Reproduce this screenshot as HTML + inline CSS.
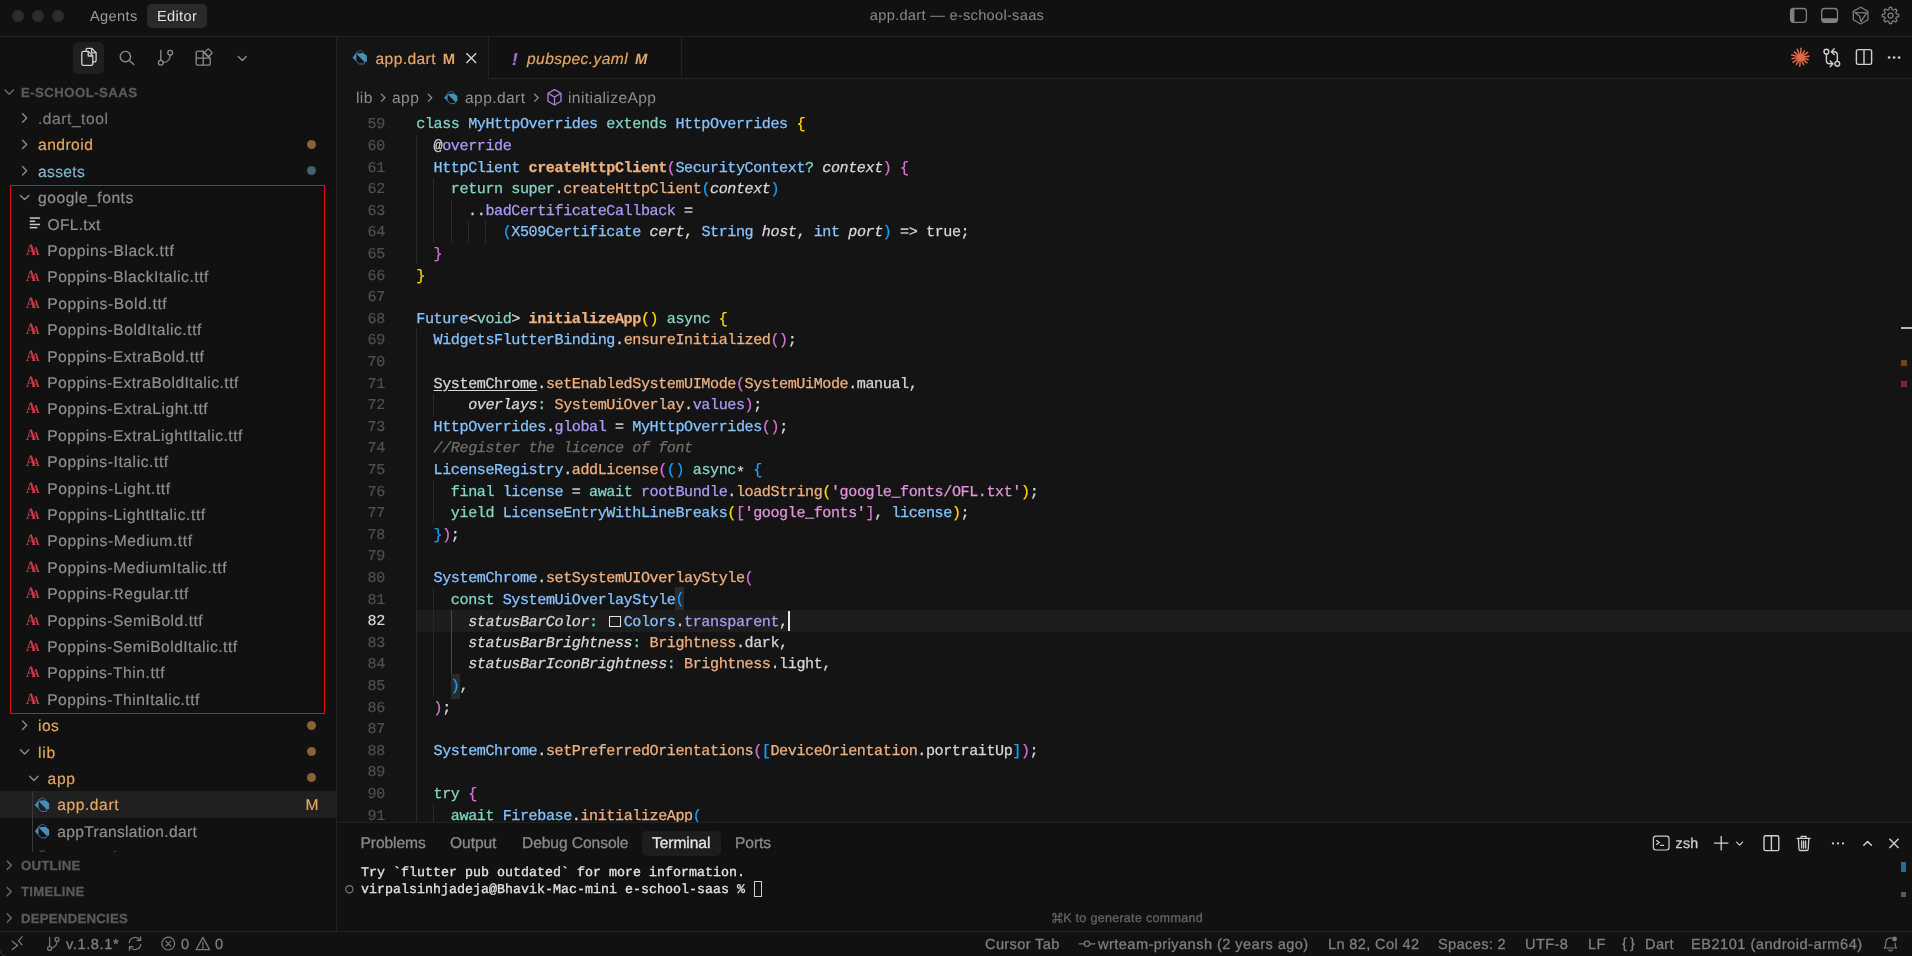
<!DOCTYPE html><html><head><meta charset="utf-8"><title>app.dart</title><style>
*{box-sizing:border-box;margin:0;padding:0}
html,body{width:1912px;height:956px;overflow:hidden;background:#111111;}
body{font-family:"Liberation Sans", sans-serif;font-size:15.6px;color:#8f8f8f;position:relative;text-rendering:geometricPrecision}
.abs{position:absolute}
#root{position:absolute;left:0;top:0;width:1912px;height:956px;will-change:transform}
svg{position:absolute;overflow:visible}
/* title bar */
#title{position:absolute;left:0;top:0;width:1912px;height:37px;background:#111111;border-bottom:1px solid #222222}
.tl{position:absolute;top:10px;width:12px;height:12px;border-radius:50%;background:#2c2c2c}
#agents{position:absolute;left:90px;top:9px;font-size:14.6px;color:#9a9a9a;letter-spacing:.35px}
#editorbtn{position:absolute;left:147px;top:4px;width:60px;height:24px;border-radius:5px;background:#2a2a2a;color:#e4e4e4;font-size:14.6px;text-align:center;line-height:26px;letter-spacing:.35px}
#ttext{position:absolute;left:757px;width:400px;top:8px;text-align:center;font-size:14.6px;color:#8a8a8a;letter-spacing:.3px}
/* sidebar */
#side{position:absolute;left:0;top:37px;width:337px;height:894px;background:#111111;border-right:1px solid #222222}
#actsel{position:absolute;left:73px;top:42px;width:31px;height:32px;border-radius:5px;background:#1f1f1f}
.sec{position:absolute;left:21px;font-size:13.2px;font-weight:bold;color:#5a5a5a;letter-spacing:.45px;line-height:28.4px;height:26.4px;-webkit-text-stroke:0.3px}
.row{position:absolute;left:0;width:336px;height:26.4px;line-height:26.4px;white-space:nowrap;letter-spacing:.5px;-webkit-text-stroke:0.2px}
.row span{position:absolute;top:2.2px}
.sel{background:#202020}
.mod{color:#e5a663} .unt{color:#7fb5cb} .ign{color:#7c7c7c}
.dot{position:absolute;left:306.5px;width:9px;height:9px;border-radius:50%}
.dm{background:#8a6234} .du{background:#426270}
#redbox{position:absolute;left:10px;top:185px;width:314.8px;height:529px;border:1.1px solid #ec0c0c}
/* editor */
#ed{position:absolute;left:337px;top:37px;width:1575px;height:786px;background:#141414}
#tabs{position:absolute;left:337px;top:37px;width:1575px;height:42px;background:#111111;border-bottom:1px solid #222222}
#tab1{position:absolute;left:337px;top:37px;width:152px;height:42px;background:#141414;border-right:1px solid #222222}
#tab2{position:absolute;left:489px;top:37px;width:193px;height:41px;border-right:1px solid #222222}
.tabt{position:absolute;top:50.6px;line-height:18px;font-size:15.6px;color:#e5a663;white-space:nowrap;letter-spacing:.4px;-webkit-text-stroke:0.2px}
#crumbs span{position:absolute;top:89.6px;line-height:18px;font-size:15.6px;color:#8f8f8f;white-space:nowrap;letter-spacing:.4px}
/* code */
.ln{position:absolute;left:337px;width:47.8px;text-align:right;font-family:"Liberation Mono", monospace;font-size:15.1px;letter-spacing:-0.42px;-webkit-text-stroke:0.2px;line-height:21.6px;height:21.6px;color:#505050}
.cur-ln{color:#d6d6dd}
.cl{position:absolute;left:416.3px;font-family:"Liberation Mono", monospace;font-size:15.1px;letter-spacing:-0.42px;line-height:21.6px;height:21.6px;white-space:pre;color:#d6d6dd;-webkit-text-stroke:0.25px}
.hl{position:absolute;left:416px;width:1496px;height:21.6px;background:#1d1d1d}
.g{position:absolute;width:1px;height:21.6px;background:#2a2a2a}
.ga{background:#4a4a4a}
.k{color:#83d6c5} .t{color:#87c3ff} .f{color:#efb080} .fb{color:#efb080;font-weight:bold}
.p{color:#aa9bf5} .w{color:#d6d6dd} .i{color:#d6d6dd;font-style:italic} .s{color:#e394dc}
.c{color:#6d6d6d;font-style:italic} .ast{color:#d6d6dd;position:relative;top:3.2px} .u{color:#d6d6dd;text-decoration:underline;text-underline-offset:2px}
.b1{color:#ffd700} .b2{color:#da70d6} .b3{color:#179fff}
.bm{background:#2b2b2b;padding:3.4px 0 3.6px}
.cbox{display:inline-block;width:11.5px;height:11.5px;border:1.3px solid #e6e6e6;margin:0 2.9px 0 2.9px;vertical-align:-1px;background:transparent}
.caret{display:inline-block;width:2px;height:20px;background:#e8e8e8;vertical-align:-5px;margin-left:0}
/* panel */
#panel{position:absolute;left:337px;top:822px;width:1575px;height:109px;background:#111111;border-top:1px solid #222222}
.pt{position:absolute;top:835px;line-height:18px;font-size:15.6px;color:#8a8a8a;white-space:nowrap;letter-spacing:-.08px;-webkit-text-stroke:0.3px}
#pterm{position:absolute;left:642px;top:830.5px;width:79px;height:25px;border-radius:5px;background:#1d1d1d}
.term{position:absolute;left:361px;font-family:"Liberation Mono", monospace;font-size:13.33px;line-height:16.8px;color:#e2e2e2;white-space:pre;-webkit-text-stroke:0.3px}
/* status */
#status{position:absolute;left:0;top:931px;width:1912px;height:25px;background:#111111;border-top:1px solid #222222}
.st{position:absolute;top:936.4px;line-height:18px;font-size:14.6px;color:#808080;white-space:nowrap;letter-spacing:.35px;-webkit-text-stroke:0.25px}
</style></head><body>
<div id="root">
<div id="ed"></div><div id="tabs"></div><div id="tab1"></div><div id="tab2"></div>
<div id="side"></div>
<div id="title"></div>
<div class="tl" style="left:12px"></div>
<div class="tl" style="left:32px"></div>
<div class="tl" style="left:52px"></div>
<div id="agents">Agents</div><div id="editorbtn">Editor</div>
<div id="ttext">app.dart — e-school-saas</div>
<div id="actsel"></div>
<div class="sec" style="top:78.8px">E-SCHOOL-SAAS</div>
<div class="row" style="top:104.8px"><span class="ign nm" style="left:38.0px;letter-spacing:0.541px">.dart_tool</span></div>
<div class="row" style="top:131.2px"><span class="mod nm" style="left:38.0px;letter-spacing:0.478px">android</span></div>
<div class="dot dm" style="top:139.7px"></div>
<div class="row" style="top:157.6px"><span class="unt nm" style="left:38.0px;letter-spacing:0.344px">assets</span></div>
<div class="dot du" style="top:166.1px"></div>
<div class="row" style="top:184.0px"><span class=" nm" style="left:38.0px;letter-spacing:0.544px">google_fonts</span></div>
<div class="row" style="top:210.4px"><span class=" nm" style="left:47.6px;letter-spacing:0.280px">OFL.txt</span></div>
<div class="row" style="top:236.8px"><span class=" nm" style="left:47.2px;letter-spacing:0.600px">Poppins-Black.ttf</span></div>
<div class="row" style="top:263.2px"><span class=" nm" style="left:47.2px;letter-spacing:0.552px">Poppins-BlackItalic.ttf</span></div>
<div class="row" style="top:289.6px"><span class=" nm" style="left:47.2px;letter-spacing:0.628px">Poppins-Bold.ttf</span></div>
<div class="row" style="top:316.0px"><span class=" nm" style="left:47.2px;letter-spacing:0.574px">Poppins-BoldItalic.ttf</span></div>
<div class="row" style="top:342.4px"><span class=" nm" style="left:47.2px;letter-spacing:0.511px">Poppins-ExtraBold.ttf</span></div>
<div class="row" style="top:368.8px"><span class=" nm" style="left:47.2px;letter-spacing:0.483px">Poppins-ExtraBoldItalic.ttf</span></div>
<div class="row" style="top:395.2px"><span class=" nm" style="left:47.2px;letter-spacing:0.544px">Poppins-ExtraLight.ttf</span></div>
<div class="row" style="top:421.6px"><span class=" nm" style="left:47.2px;letter-spacing:0.521px">Poppins-ExtraLightItalic.ttf</span></div>
<div class="row" style="top:448.0px"><span class=" nm" style="left:47.2px;letter-spacing:0.592px">Poppins-Italic.ttf</span></div>
<div class="row" style="top:474.4px"><span class=" nm" style="left:47.2px;letter-spacing:0.644px">Poppins-Light.ttf</span></div>
<div class="row" style="top:500.8px"><span class=" nm" style="left:47.2px;letter-spacing:0.602px">Poppins-LightItalic.ttf</span></div>
<div class="row" style="top:527.2px"><span class=" nm" style="left:47.2px;letter-spacing:0.622px">Poppins-Medium.ttf</span></div>
<div class="row" style="top:553.6px"><span class=" nm" style="left:47.2px;letter-spacing:0.561px">Poppins-MediumItalic.ttf</span></div>
<div class="row" style="top:580.0px"><span class=" nm" style="left:47.2px;letter-spacing:0.472px">Poppins-Regular.ttf</span></div>
<div class="row" style="top:606.4px"><span class=" nm" style="left:47.2px;letter-spacing:0.520px">Poppins-SemiBold.ttf</span></div>
<div class="row" style="top:632.8px"><span class=" nm" style="left:47.2px;letter-spacing:0.489px">Poppins-SemiBoldItalic.ttf</span></div>
<div class="row" style="top:659.2px"><span class=" nm" style="left:47.2px;letter-spacing:0.540px">Poppins-Thin.ttf</span></div>
<div class="row" style="top:685.6px"><span class=" nm" style="left:47.2px;letter-spacing:0.521px">Poppins-ThinItalic.ttf</span></div>
<div class="row" style="top:712.0px"><span class="mod nm" style="left:38.0px;letter-spacing:0.481px">ios</span></div>
<div class="dot dm" style="top:720.5px"></div>
<div class="row" style="top:738.4px"><span class="mod nm" style="left:38.0px;letter-spacing:0.795px">lib</span></div>
<div class="dot dm" style="top:746.9px"></div>
<div class="row" style="top:764.8px"><span class="mod nm" style="left:47.6px;letter-spacing:0.688px">app</span></div>
<div class="dot dm" style="top:773.3px"></div>
<div class="row sel" style="top:791.2px"><span class="mod nm" style="left:57.2px;letter-spacing:0.583px">app.dart</span><span class="mod" style="left:305.5px;letter-spacing:0">M</span></div>
<div class="row" style="top:817.6px"><span class=" nm" style="left:57.2px;letter-spacing:0.324px">appTranslation.dart</span></div>
<div class="abs" style="left:0;top:844.0px;width:336px;height:8.0px;overflow:hidden"><div class="row" style="top:0"><span class="mod" style="left:57.2px">routes.dart</span><span class="mod" style="left:305.5px;letter-spacing:0">M</span></div><svg width="336" height="27" style="left:0;top:0"><g transform="translate(42.2 13.2) scale(1.0)"><path d="M-3.8 -4.3 L-0.3 -6.3 Q0.5 -6.8 1.3 -6.3 L3.4 -4.6" fill="none" stroke="#2f6f94" stroke-width="1" stroke-linejoin="round" stroke-linecap="round"/><path d="M-6.9 0.7 L-1.4 6.6 Q-1 7 -0.4 7 L3.6 7 Q4.3 7 4.4 6.3 L4.8 4.7" fill="none" stroke="#3a7ea6" stroke-width="1" stroke-linejoin="round" stroke-linecap="round"/><path d="M-3.9 -3.6 L3.3 -4.1 L6.9 -1.2 L6.9 4.7 L4.2 4.8 Z" fill="#468fb8"/><path d="M-7.2 0.5 L-3.7 -4.4 L-3.7 3.9 Z" fill="#468fb8"/></g></svg></div>
<div class="abs" style="left:31.5px;top:791px;width:1px;height:61px;background:#3a3a3a"></div>
<div id="redbox"></div>
<div class="sec" style="top:852px;letter-spacing:.25px">OUTLINE</div>
<div class="sec" style="top:878.4px;letter-spacing:.25px">TIMELINE</div>
<div class="sec" style="top:904.8px;letter-spacing:.25px">DEPENDENCIES</div>
<div class="tabt" style="left:375.5px">app.dart</div><div class="tabt" style="left:442.8px;letter-spacing:0;font-size:14.8px;font-weight:bold;-webkit-text-stroke:0;top:50.8px">M</div>
<div class="tabt" style="left:512px;font-style:italic;font-weight:bold;color:#a66fd6;font-size:17px">!</div><div class="tabt" style="left:527px;font-style:italic">pubspec.yaml</div><div class="tabt" style="left:635px;font-style:italic;letter-spacing:0;font-size:14.8px;font-weight:bold;-webkit-text-stroke:0;top:50.8px">M</div>
<div id="crumbs"><span style="left:356px">lib</span><span style="left:392px">app</span><span style="left:465px">app.dart</span><span style="left:568px">initializeApp</span></div>
<div class="ln" style="top:114.4px">59</div>
<div class="cl" style="top:114.4px"><span class="k">class </span><span class="t">MyHttpOverrides </span><span class="k">extends </span><span class="t">HttpOverrides </span><span class="b1">{</span></div>
<div class="ln" style="top:136.0px">60</div>
<div class="g" style="left:416.00px;top:134.8px"></div>
<div class="cl" style="top:136.0px"><span class="w">  @</span><span class="p">override</span></div>
<div class="ln" style="top:157.6px">61</div>
<div class="g" style="left:416.00px;top:156.4px"></div>
<div class="cl" style="top:157.6px"><span class="w">  </span><span class="t">HttpClient </span><span class="fb">createHttpClient</span><span class="b2">(</span><span class="t">SecurityContext</span><span class="k">? </span><span class="i">context</span><span class="b2">) {</span></div>
<div class="ln" style="top:179.2px">62</div>
<div class="g" style="left:416.00px;top:178.0px"></div>
<div class="g" style="left:433.28px;top:178.0px"></div>
<div class="cl" style="top:179.2px"><span class="w">    </span><span class="k">return super</span><span class="w">.</span><span class="f">createHttpClient</span><span class="b3">(</span><span class="i">context</span><span class="b3">)</span></div>
<div class="ln" style="top:200.8px">63</div>
<div class="g" style="left:416.00px;top:199.6px"></div>
<div class="g" style="left:433.28px;top:199.6px"></div>
<div class="g" style="left:450.56px;top:199.6px"></div>
<div class="cl" style="top:200.8px"><span class="w">      ..</span><span class="p">badCertificateCallback</span><span class="w"> =</span></div>
<div class="ln" style="top:222.4px">64</div>
<div class="g" style="left:416.00px;top:221.2px"></div>
<div class="g" style="left:433.28px;top:221.2px"></div>
<div class="g" style="left:450.56px;top:221.2px"></div>
<div class="g" style="left:467.84px;top:221.2px"></div>
<div class="g" style="left:485.12px;top:221.2px"></div>
<div class="cl" style="top:222.4px"><span class="w">          </span><span class="b3">(</span><span class="t">X509Certificate </span><span class="i">cert</span><span class="w">, </span><span class="t">String </span><span class="i">host</span><span class="w">, </span><span class="t">int </span><span class="i">port</span><span class="b3">)</span><span class="w"> =&gt; true;</span></div>
<div class="ln" style="top:244.0px">65</div>
<div class="g" style="left:416.00px;top:242.8px"></div>
<div class="cl" style="top:244.0px"><span class="w">  </span><span class="b2">}</span></div>
<div class="ln" style="top:265.6px">66</div>
<div class="cl" style="top:265.6px"><span class="b1">}</span></div>
<div class="ln" style="top:287.2px">67</div>
<div class="ln" style="top:308.8px">68</div>
<div class="cl" style="top:308.8px"><span class="t">Future</span><span class="w">&lt;</span><span class="k">void</span><span class="w">&gt; </span><span class="fb">initializeApp</span><span class="b1">() </span><span class="k">async </span><span class="b1">{</span></div>
<div class="ln" style="top:330.4px">69</div>
<div class="g" style="left:416.00px;top:329.2px"></div>
<div class="cl" style="top:330.4px"><span class="w">  </span><span class="t">WidgetsFlutterBinding</span><span class="w">.</span><span class="f">ensureInitialized</span><span class="b2">()</span><span class="w">;</span></div>
<div class="ln" style="top:352.0px">70</div>
<div class="g" style="left:416.00px;top:350.8px"></div>
<div class="ln" style="top:373.6px">71</div>
<div class="g" style="left:416.00px;top:372.4px"></div>
<div class="cl" style="top:373.6px"><span class="w">  </span><span class="u">SystemChrome</span><span class="w">.</span><span class="f">setEnabledSystemUIMode</span><span class="b2">(</span><span class="f">SystemUiMode</span><span class="w">.manual,</span></div>
<div class="ln" style="top:395.2px">72</div>
<div class="g" style="left:416.00px;top:394.0px"></div>
<div class="g" style="left:433.28px;top:394.0px"></div>
<div class="cl" style="top:395.2px"><span class="w">      </span><span class="i">overlays</span><span class="k">: </span><span class="f">SystemUiOverlay</span><span class="w">.</span><span class="p">values</span><span class="b2">)</span><span class="w">;</span></div>
<div class="ln" style="top:416.8px">73</div>
<div class="g" style="left:416.00px;top:415.6px"></div>
<div class="cl" style="top:416.8px"><span class="w">  </span><span class="t">HttpOverrides</span><span class="w">.</span><span class="p">global</span><span class="w"> = </span><span class="t">MyHttpOverrides</span><span class="b2">()</span><span class="w">;</span></div>
<div class="ln" style="top:438.4px">74</div>
<div class="g" style="left:416.00px;top:437.2px"></div>
<div class="cl" style="top:438.4px"><span class="w">  </span><span class="c">//Register the licence of font</span></div>
<div class="ln" style="top:460.0px">75</div>
<div class="g" style="left:416.00px;top:458.8px"></div>
<div class="cl" style="top:460.0px"><span class="w">  </span><span class="t">LicenseRegistry</span><span class="w">.</span><span class="f">addLicense</span><span class="b2">(</span><span class="b3">() </span><span class="k">async</span><span class="ast">*</span><span class="w"> </span><span class="b3">{</span></div>
<div class="ln" style="top:481.6px">76</div>
<div class="g" style="left:416.00px;top:480.4px"></div>
<div class="g" style="left:433.28px;top:480.4px"></div>
<div class="cl" style="top:481.6px"><span class="w">    </span><span class="k">final </span><span class="t">license</span><span class="w"> = </span><span class="k">await </span><span class="p">rootBundle</span><span class="w">.</span><span class="f">loadString</span><span class="b1">(</span><span class="s">&#x27;google_fonts/OFL.txt&#x27;</span><span class="b1">)</span><span class="w">;</span></div>
<div class="ln" style="top:503.2px">77</div>
<div class="g" style="left:416.00px;top:502.0px"></div>
<div class="g" style="left:433.28px;top:502.0px"></div>
<div class="cl" style="top:503.2px"><span class="w">    </span><span class="k">yield </span><span class="t">LicenseEntryWithLineBreaks</span><span class="b1">(</span><span class="b2">[</span><span class="s">&#x27;google_fonts&#x27;</span><span class="b2">]</span><span class="w">, </span><span class="t">license</span><span class="b1">)</span><span class="w">;</span></div>
<div class="ln" style="top:524.8px">78</div>
<div class="g" style="left:416.00px;top:523.6px"></div>
<div class="cl" style="top:524.8px"><span class="w">  </span><span class="b3">}</span><span class="b2">)</span><span class="w">;</span></div>
<div class="ln" style="top:546.4px">79</div>
<div class="g" style="left:416.00px;top:545.2px"></div>
<div class="ln" style="top:568.0px">80</div>
<div class="g" style="left:416.00px;top:566.8px"></div>
<div class="cl" style="top:568.0px"><span class="w">  </span><span class="t">SystemChrome</span><span class="w">.</span><span class="f">setSystemUIOverlayStyle</span><span class="b2">(</span></div>
<div class="ln" style="top:589.6px">81</div>
<div class="g" style="left:416.00px;top:588.4px"></div>
<div class="g" style="left:433.28px;top:588.4px"></div>
<div class="cl" style="top:589.6px"><span class="w">    </span><span class="k">const </span><span class="t">SystemUiOverlayStyle</span><span class="b3 bm">(</span></div>
<div class="hl" style="top:610.0px"></div>
<div class="ln cur-ln" style="top:611.2px">82</div>
<div class="g" style="left:416.00px;top:610.0px"></div>
<div class="g" style="left:433.28px;top:610.0px"></div>
<div class="g ga" style="left:450.56px;top:610.0px"></div>
<div class="cl" style="top:611.2px"><span class="w">      </span><span class="i">statusBarColor</span><span class="k">: </span><span class="cbox"></span><span class="t">Colors</span><span class="w">.</span><span class="p">transparent</span><span class="w">,</span><span class="caret"></span></div>
<div class="ln" style="top:632.8px">83</div>
<div class="g" style="left:416.00px;top:631.6px"></div>
<div class="g" style="left:433.28px;top:631.6px"></div>
<div class="g ga" style="left:450.56px;top:631.6px"></div>
<div class="cl" style="top:632.8px"><span class="w">      </span><span class="i">statusBarBrightness</span><span class="k">: </span><span class="f">Brightness</span><span class="w">.dark,</span></div>
<div class="ln" style="top:654.4px">84</div>
<div class="g" style="left:416.00px;top:653.2px"></div>
<div class="g" style="left:433.28px;top:653.2px"></div>
<div class="g ga" style="left:450.56px;top:653.2px"></div>
<div class="cl" style="top:654.4px"><span class="w">      </span><span class="i">statusBarIconBrightness</span><span class="k">: </span><span class="f">Brightness</span><span class="w">.light,</span></div>
<div class="ln" style="top:676.0px">85</div>
<div class="g" style="left:416.00px;top:674.8px"></div>
<div class="g" style="left:433.28px;top:674.8px"></div>
<div class="cl" style="top:676.0px"><span class="w">    </span><span class="b3 bm">)</span><span class="w">,</span></div>
<div class="ln" style="top:697.6px">86</div>
<div class="g" style="left:416.00px;top:696.4px"></div>
<div class="cl" style="top:697.6px"><span class="w">  </span><span class="b2">)</span><span class="w">;</span></div>
<div class="ln" style="top:719.2px">87</div>
<div class="g" style="left:416.00px;top:718.0px"></div>
<div class="ln" style="top:740.8px">88</div>
<div class="g" style="left:416.00px;top:739.6px"></div>
<div class="cl" style="top:740.8px"><span class="w">  </span><span class="t">SystemChrome</span><span class="w">.</span><span class="f">setPreferredOrientations</span><span class="b2">(</span><span class="b3">[</span><span class="f">DeviceOrientation</span><span class="w">.portraitUp</span><span class="b3">]</span><span class="b2">)</span><span class="w">;</span></div>
<div class="ln" style="top:762.4px">89</div>
<div class="g" style="left:416.00px;top:761.2px"></div>
<div class="ln" style="top:784.0px">90</div>
<div class="g" style="left:416.00px;top:782.8px"></div>
<div class="cl" style="top:784.0px"><span class="w">  </span><span class="k">try </span><span class="b2">{</span></div>
<div class="ln" style="top:805.6px">91</div>
<div class="g" style="left:416.00px;top:804.4px"></div>
<div class="g" style="left:433.28px;top:804.4px"></div>
<div class="cl" style="top:805.6px"><span class="w">    </span><span class="k">await </span><span class="t">Firebase</span><span class="w">.</span><span class="f">initializeApp</span><span class="b3">(</span></div>
<div id="panel"></div><div id="pterm"></div>
<div class="pt" style="left:360.5px">Problems</div>
<div class="pt" style="left:450px">Output</div>
<div class="pt" style="left:522px">Debug Console</div>
<div class="pt" style="left:652px;color:#e4e4e4">Terminal</div>
<div class="pt" style="left:735px">Ports</div>
<div class="term" style="top:865.9px">Try `flutter pub outdated` for more information.</div>
<div class="term" style="top:882.7px">virpalsinhjadeja@Bhavik-Mac-mini e-school-saas % </div>
<div class="abs" style="left:753.5px;top:881px;width:8px;height:16px;border:1px solid #d0d0d0"></div>
<div class="abs" style="left:1063.2px;top:909.8px;font-size:12.5px;line-height:16px;color:#646464;letter-spacing:.3px;white-space:nowrap;-webkit-text-stroke:0.3px">K to generate command</div>
<div class="abs" style="left:1900.5px;top:862px;width:5px;height:10px;background:#1a6fa3"></div>
<div class="abs" style="left:1901px;top:892px;width:4.5px;height:4.5px;background:#5a5a5a"></div>
<div id="status"></div>
<div class="pt" style="left:1675.6px;color:#cfcfcf;font-size:14.2px;letter-spacing:.2px;-webkit-text-stroke:0.3px">zsh</div>
<div class="st" style="left:1622px;letter-spacing:3.2px;top:935px">{}</div>
<div class="st" style="left:66px;letter-spacing:0.6px">v.1.8.1*</div>
<div class="st" style="left:181px;letter-spacing:0.35px">0</div>
<div class="st" style="left:215px;letter-spacing:0.35px">0</div>
<div class="st" style="left:985px;letter-spacing:0.35px">Cursor Tab</div>
<div class="st" style="left:1098px;letter-spacing:0.44px">wrteam-priyansh (2 years ago)</div>
<div class="st" style="left:1328px;letter-spacing:0.35px">Ln 82, Col 42</div>
<div class="st" style="left:1438px;letter-spacing:0.35px">Spaces: 2</div>
<div class="st" style="left:1525px;letter-spacing:0.35px">UTF-8</div>
<div class="st" style="left:1588px;letter-spacing:0.35px">LF</div>
<div class="st" style="left:1645px;letter-spacing:0.35px">Dart</div>
<div class="st" style="left:1691px;letter-spacing:0.5px">EB2101 (android-arm64)</div>
<div class="abs" style="left:1900.5px;top:327px;width:12px;height:2px;background:#b8b8b8"></div>
<div class="abs" style="left:1900.5px;top:360px;width:6px;height:6px;background:#6b4514"></div>
<div class="abs" style="left:1900.5px;top:381px;width:6px;height:6px;background:#7a2340"></div>
<svg width="1912" height="956" style="left:0;top:0">
<path d="M5.0 90.1 L9.2 94.3 L13.4 90.1" fill="none" stroke="#6a6a6a" stroke-width="1.4" stroke-linecap="round" stroke-linejoin="round"/>
<path d="M7.1 861.0 L11.3 865.2 L7.1 869.4" fill="none" stroke="#6a6a6a" stroke-width="1.4" stroke-linecap="round" stroke-linejoin="round"/>
<path d="M7.1 887.4 L11.3 891.6 L7.1 895.8" fill="none" stroke="#6a6a6a" stroke-width="1.4" stroke-linecap="round" stroke-linejoin="round"/>
<path d="M7.1 913.8 L11.3 918.0 L7.1 922.2" fill="none" stroke="#6a6a6a" stroke-width="1.4" stroke-linecap="round" stroke-linejoin="round"/>
<path d="M22.5 113.8 L26.7 118.0 L22.5 122.2" fill="none" stroke="#8a8a8a" stroke-width="1.4" stroke-linecap="round" stroke-linejoin="round"/>
<path d="M22.5 140.2 L26.7 144.4 L22.5 148.6" fill="none" stroke="#8a8a8a" stroke-width="1.4" stroke-linecap="round" stroke-linejoin="round"/>
<path d="M22.5 166.6 L26.7 170.8 L22.5 175.0" fill="none" stroke="#8a8a8a" stroke-width="1.4" stroke-linecap="round" stroke-linejoin="round"/>
<path d="M20.4 195.4 L24.6 199.6 L28.8 195.4" fill="none" stroke="#8a8a8a" stroke-width="1.4" stroke-linecap="round" stroke-linejoin="round"/>
<rect x="29.8" y="217.3" width="10.3" height="1.5" fill="#c8c8c8"/><rect x="29.8" y="220.5" width="5.4" height="1.5" fill="#c8c8c8"/><rect x="29.8" y="223.7" width="10.3" height="1.5" fill="#c8c8c8"/><rect x="29.8" y="226.9" width="7.6" height="1.5" fill="#c8c8c8"/>
<g transform="translate(26.0 255.0) scale(0.88 1.03)"><text x="0" y="0" font-family="Liberation Serif" font-weight="bold" font-size="15.5" fill="#cc3e44">A</text><text x="7.2" y="0" font-family="Liberation Serif" font-weight="bold" font-size="11.5" fill="#cc3e44">A</text></g>
<g transform="translate(26.0 281.4) scale(0.88 1.03)"><text x="0" y="0" font-family="Liberation Serif" font-weight="bold" font-size="15.5" fill="#cc3e44">A</text><text x="7.2" y="0" font-family="Liberation Serif" font-weight="bold" font-size="11.5" fill="#cc3e44">A</text></g>
<g transform="translate(26.0 307.8) scale(0.88 1.03)"><text x="0" y="0" font-family="Liberation Serif" font-weight="bold" font-size="15.5" fill="#cc3e44">A</text><text x="7.2" y="0" font-family="Liberation Serif" font-weight="bold" font-size="11.5" fill="#cc3e44">A</text></g>
<g transform="translate(26.0 334.2) scale(0.88 1.03)"><text x="0" y="0" font-family="Liberation Serif" font-weight="bold" font-size="15.5" fill="#cc3e44">A</text><text x="7.2" y="0" font-family="Liberation Serif" font-weight="bold" font-size="11.5" fill="#cc3e44">A</text></g>
<g transform="translate(26.0 360.6) scale(0.88 1.03)"><text x="0" y="0" font-family="Liberation Serif" font-weight="bold" font-size="15.5" fill="#cc3e44">A</text><text x="7.2" y="0" font-family="Liberation Serif" font-weight="bold" font-size="11.5" fill="#cc3e44">A</text></g>
<g transform="translate(26.0 387.0) scale(0.88 1.03)"><text x="0" y="0" font-family="Liberation Serif" font-weight="bold" font-size="15.5" fill="#cc3e44">A</text><text x="7.2" y="0" font-family="Liberation Serif" font-weight="bold" font-size="11.5" fill="#cc3e44">A</text></g>
<g transform="translate(26.0 413.4) scale(0.88 1.03)"><text x="0" y="0" font-family="Liberation Serif" font-weight="bold" font-size="15.5" fill="#cc3e44">A</text><text x="7.2" y="0" font-family="Liberation Serif" font-weight="bold" font-size="11.5" fill="#cc3e44">A</text></g>
<g transform="translate(26.0 439.8) scale(0.88 1.03)"><text x="0" y="0" font-family="Liberation Serif" font-weight="bold" font-size="15.5" fill="#cc3e44">A</text><text x="7.2" y="0" font-family="Liberation Serif" font-weight="bold" font-size="11.5" fill="#cc3e44">A</text></g>
<g transform="translate(26.0 466.2) scale(0.88 1.03)"><text x="0" y="0" font-family="Liberation Serif" font-weight="bold" font-size="15.5" fill="#cc3e44">A</text><text x="7.2" y="0" font-family="Liberation Serif" font-weight="bold" font-size="11.5" fill="#cc3e44">A</text></g>
<g transform="translate(26.0 492.6) scale(0.88 1.03)"><text x="0" y="0" font-family="Liberation Serif" font-weight="bold" font-size="15.5" fill="#cc3e44">A</text><text x="7.2" y="0" font-family="Liberation Serif" font-weight="bold" font-size="11.5" fill="#cc3e44">A</text></g>
<g transform="translate(26.0 519.0) scale(0.88 1.03)"><text x="0" y="0" font-family="Liberation Serif" font-weight="bold" font-size="15.5" fill="#cc3e44">A</text><text x="7.2" y="0" font-family="Liberation Serif" font-weight="bold" font-size="11.5" fill="#cc3e44">A</text></g>
<g transform="translate(26.0 545.4) scale(0.88 1.03)"><text x="0" y="0" font-family="Liberation Serif" font-weight="bold" font-size="15.5" fill="#cc3e44">A</text><text x="7.2" y="0" font-family="Liberation Serif" font-weight="bold" font-size="11.5" fill="#cc3e44">A</text></g>
<g transform="translate(26.0 571.8) scale(0.88 1.03)"><text x="0" y="0" font-family="Liberation Serif" font-weight="bold" font-size="15.5" fill="#cc3e44">A</text><text x="7.2" y="0" font-family="Liberation Serif" font-weight="bold" font-size="11.5" fill="#cc3e44">A</text></g>
<g transform="translate(26.0 598.2) scale(0.88 1.03)"><text x="0" y="0" font-family="Liberation Serif" font-weight="bold" font-size="15.5" fill="#cc3e44">A</text><text x="7.2" y="0" font-family="Liberation Serif" font-weight="bold" font-size="11.5" fill="#cc3e44">A</text></g>
<g transform="translate(26.0 624.6) scale(0.88 1.03)"><text x="0" y="0" font-family="Liberation Serif" font-weight="bold" font-size="15.5" fill="#cc3e44">A</text><text x="7.2" y="0" font-family="Liberation Serif" font-weight="bold" font-size="11.5" fill="#cc3e44">A</text></g>
<g transform="translate(26.0 651.0) scale(0.88 1.03)"><text x="0" y="0" font-family="Liberation Serif" font-weight="bold" font-size="15.5" fill="#cc3e44">A</text><text x="7.2" y="0" font-family="Liberation Serif" font-weight="bold" font-size="11.5" fill="#cc3e44">A</text></g>
<g transform="translate(26.0 677.4) scale(0.88 1.03)"><text x="0" y="0" font-family="Liberation Serif" font-weight="bold" font-size="15.5" fill="#cc3e44">A</text><text x="7.2" y="0" font-family="Liberation Serif" font-weight="bold" font-size="11.5" fill="#cc3e44">A</text></g>
<g transform="translate(26.0 703.8) scale(0.88 1.03)"><text x="0" y="0" font-family="Liberation Serif" font-weight="bold" font-size="15.5" fill="#cc3e44">A</text><text x="7.2" y="0" font-family="Liberation Serif" font-weight="bold" font-size="11.5" fill="#cc3e44">A</text></g>
<path d="M22.5 721.0 L26.7 725.2 L22.5 729.4" fill="none" stroke="#8a8a8a" stroke-width="1.4" stroke-linecap="round" stroke-linejoin="round"/>
<path d="M20.4 749.8 L24.6 754.0 L28.8 749.8" fill="none" stroke="#8a8a8a" stroke-width="1.4" stroke-linecap="round" stroke-linejoin="round"/>
<path d="M29.7 776.2 L33.9 780.4 L38.1 776.2" fill="none" stroke="#8a8a8a" stroke-width="1.4" stroke-linecap="round" stroke-linejoin="round"/>
<g transform="translate(42.2 804.4) scale(1.0)"><path d="M-3.8 -4.3 L-0.3 -6.3 Q0.5 -6.8 1.3 -6.3 L3.4 -4.6" fill="none" stroke="#2f6f94" stroke-width="1" stroke-linejoin="round" stroke-linecap="round"/><path d="M-6.9 0.7 L-1.4 6.6 Q-1 7 -0.4 7 L3.6 7 Q4.3 7 4.4 6.3 L4.8 4.7" fill="none" stroke="#3a7ea6" stroke-width="1" stroke-linejoin="round" stroke-linecap="round"/><path d="M-3.9 -3.6 L3.3 -4.1 L6.9 -1.2 L6.9 4.7 L4.2 4.8 Z" fill="#468fb8"/><path d="M-7.2 0.5 L-3.7 -4.4 L-3.7 3.9 Z" fill="#468fb8"/></g>
<g transform="translate(42.2 830.8) scale(1.0)"><path d="M-3.8 -4.3 L-0.3 -6.3 Q0.5 -6.8 1.3 -6.3 L3.4 -4.6" fill="none" stroke="#2f6f94" stroke-width="1" stroke-linejoin="round" stroke-linecap="round"/><path d="M-6.9 0.7 L-1.4 6.6 Q-1 7 -0.4 7 L3.6 7 Q4.3 7 4.4 6.3 L4.8 4.7" fill="none" stroke="#3a7ea6" stroke-width="1" stroke-linejoin="round" stroke-linecap="round"/><path d="M-3.9 -3.6 L3.3 -4.1 L6.9 -1.2 L6.9 4.7 L4.2 4.8 Z" fill="#468fb8"/><path d="M-7.2 0.5 L-3.7 -4.4 L-3.7 3.9 Z" fill="#468fb8"/></g>
<g fill="none" stroke="#cfcfcf" stroke-width="1.3" stroke-linejoin="round" stroke-linecap="round"><path d="M86 51.2 V50 a1.6 1.6 0 0 1 1.6 -1.6 h4.2 l4.3 4.3 v7.6 a1.6 1.6 0 0 1 -1.6 1.6 h-1.6"/><path d="M91.6 48.6 v4.2 h4.3"/><path d="M83.4 51.4 h5 l4.4 4.4 v8 a1.6 1.6 0 0 1 -1.6 1.6 h-7.8 a1.6 1.6 0 0 1 -1.6 -1.6 v-10.8 a1.6 1.6 0 0 1 1.6 -1.6 z"/><path d="M88.2 51.6 v4.4 h4.4"/></g>
<g fill="none" stroke="#8c8c8c" stroke-width="1.4" stroke-linecap="round"><circle cx="125.4" cy="56.6" r="5.2"/><path d="M129.3 60.4 L133.8 64.6"/></g>
<g fill="none" stroke="#8c8c8c" stroke-width="1.3" stroke-linecap="round"><circle cx="160.8" cy="62.8" r="2.4"/><circle cx="170.2" cy="52.8" r="2.4"/><path d="M160.8 50.4 V60.4"/><path d="M170.2 55.2 C170.2 60.5 166 62.4 163.2 62.7"/></g>
<g fill="none" stroke="#8c8c8c" stroke-width="1.3" stroke-linejoin="round"><path d="M203.2 51.2 h-5.6 a1.4 1.4 0 0 0 -1.4 1.4 v11.2 a1.4 1.4 0 0 0 1.4 1.4 h11.2 a1.4 1.4 0 0 0 1.4 -1.4 v-5.6 z"/><path d="M203.2 51.2 V65.2 M196.2 58.2 H210.2"/><rect x="205.4" y="49.9" width="5.8" height="5.8" rx="1" transform="rotate(45 208.3 52.8)"/></g>
<path d="M238.3 56.4 L242.3 60.4 L246.3 56.4" fill="none" stroke="#8c8c8c" stroke-width="1.4" stroke-linecap="round" stroke-linejoin="round"/>
<g fill="none" stroke="#808080" stroke-width="1.3"><rect x="1790.6" y="8.5" width="15.8" height="13.8" rx="3"/><path d="M1790.6 11.4 a3 3 0 0 1 3 -2.9 h0.8 v13.8 h-0.8 a3 3 0 0 1 -3 -2.9 z" fill="#808080" stroke="none"/><rect x="1821.7" y="8.5" width="15.8" height="13.8" rx="3"/><path d="M1821.7 18.2 h15.8 v1.2 a3 3 0 0 1 -3 2.9 h-9.8 a3 3 0 0 1 -3 -2.9 z" fill="#808080" stroke="none"/></g>
<g fill="none" stroke="#808080" stroke-width="1.25" stroke-linejoin="round"><path d="M1860.6 7.2 L1867.9 11.4 V19.8 L1860.6 24 L1853.3 19.8 V11.4 Z"/><path d="M1855 12.5 L1866.6 12.9 L1860.9 21.6 L1859.6 16.2 Z"/></g>
<path d="M1889.46 7.27 L1891.54 7.27 L1892.17 9.74 L1893.39 10.24 L1895.59 8.94 L1897.06 10.41 L1895.76 12.61 L1896.26 13.83 L1898.73 14.46 L1898.73 16.54 L1896.26 17.17 L1895.76 18.39 L1897.06 20.59 L1895.59 22.06 L1893.39 20.76 L1892.17 21.26 L1891.54 23.73 L1889.46 23.73 L1888.83 21.26 L1887.61 20.76 L1885.41 22.06 L1883.94 20.59 L1885.24 18.39 L1884.74 17.17 L1882.27 16.54 L1882.27 14.46 L1884.74 13.83 L1885.24 12.61 L1883.94 10.41 L1885.41 8.94 L1887.61 10.24 L1888.83 9.74 Z" fill="none" stroke="#808080" stroke-width="1.25" stroke-linejoin="round"/><circle cx="1890.5" cy="15.5" r="2.5" fill="none" stroke="#808080" stroke-width="1.25"/>
<path d="M1800.48 56.20 L1801.07 47.82 M1801.04 56.38 L1804.75 50.45 M1801.39 56.73 L1808.19 52.14 M1801.59 57.23 L1809.51 56.12 M1801.55 57.73 L1808.67 59.77 M1801.33 58.16 L1807.39 63.06 M1800.89 58.50 L1803.82 65.07 M1800.32 58.60 L1799.74 66.78 M1799.82 58.45 L1796.23 64.92 M1799.41 58.07 L1792.61 62.66 M1799.21 57.57 L1791.49 58.65 M1799.25 57.07 L1791.17 54.75 M1799.51 56.60 L1794.01 51.65 M1799.97 56.28 L1797.10 48.81" stroke="#e0694a" stroke-width="1.55" stroke-linecap="butt" fill="none"/><circle cx="1800.4" cy="57.4" r="2.6" fill="#e0694a"/>
<g fill="none" stroke="#cfcfcf" stroke-width="1.4" stroke-linecap="round" stroke-linejoin="round"><circle cx="1826.4" cy="51.7" r="2.4"/><circle cx="1837.3" cy="63.8" r="2.4"/><path d="M1826.4 54.2 V60.6 a3.2 3.2 0 0 0 3.2 3.2 h2.6"/><path d="M1830.2 60.9 L1833 63.8 L1830.2 66.7"/><path d="M1837.3 61.3 V54.9 a3.2 3.2 0 0 0 -3.2 -3.2 h-2.4"/><path d="M1834.2 48.8 L1831.4 51.7 L1834.2 54.6"/></g>
<g fill="none" stroke="#cfcfcf" stroke-width="1.4"><rect x="1856.4" y="49.6" width="15.2" height="14.8" rx="1.8"/><path d="M1864 49.6 V64.4"/></g>
<circle cx="1889.1" cy="57.5" r="1.35" fill="#cfcfcf"/>
<circle cx="1894.1" cy="57.5" r="1.35" fill="#cfcfcf"/>
<circle cx="1899.1" cy="57.5" r="1.35" fill="#cfcfcf"/>
<g transform="translate(360.0 57.0) scale(1.0)"><path d="M-3.8 -4.3 L-0.3 -6.3 Q0.5 -6.8 1.3 -6.3 L3.4 -4.6" fill="none" stroke="#2f6f94" stroke-width="1" stroke-linejoin="round" stroke-linecap="round"/><path d="M-6.9 0.7 L-1.4 6.6 Q-1 7 -0.4 7 L3.6 7 Q4.3 7 4.4 6.3 L4.8 4.7" fill="none" stroke="#3a7ea6" stroke-width="1" stroke-linejoin="round" stroke-linecap="round"/><path d="M-3.9 -3.6 L3.3 -4.1 L6.9 -1.2 L6.9 4.7 L4.2 4.8 Z" fill="#468fb8"/><path d="M-7.2 0.5 L-3.7 -4.4 L-3.7 3.9 Z" fill="#468fb8"/></g>
<path d="M466.4 53.2 L476.2 63 M476.2 53.2 L466.4 63" stroke="#d8d8d8" stroke-width="1.3" fill="none"/>
<path d="M381.4 94.2 L385.0 97.8 L381.4 101.4" fill="none" stroke="#8a8a8a" stroke-width="1.3" stroke-linecap="round" stroke-linejoin="round"/>
<path d="M428.2 94.2 L431.8 97.8 L428.2 101.4" fill="none" stroke="#8a8a8a" stroke-width="1.3" stroke-linecap="round" stroke-linejoin="round"/>
<path d="M534.6 94.2 L538.2 97.8 L534.6 101.4" fill="none" stroke="#8a8a8a" stroke-width="1.3" stroke-linecap="round" stroke-linejoin="round"/>
<g transform="translate(451.0 97.2) scale(0.92)"><path d="M-3.8 -4.3 L-0.3 -6.3 Q0.5 -6.8 1.3 -6.3 L3.4 -4.6" fill="none" stroke="#2f6f94" stroke-width="1" stroke-linejoin="round" stroke-linecap="round"/><path d="M-6.9 0.7 L-1.4 6.6 Q-1 7 -0.4 7 L3.6 7 Q4.3 7 4.4 6.3 L4.8 4.7" fill="none" stroke="#3a7ea6" stroke-width="1" stroke-linejoin="round" stroke-linecap="round"/><path d="M-3.9 -3.6 L3.3 -4.1 L6.9 -1.2 L6.9 4.7 L4.2 4.8 Z" fill="#468fb8"/><path d="M-7.2 0.5 L-3.7 -4.4 L-3.7 3.9 Z" fill="#468fb8"/></g>
<g fill="none" stroke="#b180d7" stroke-width="1.3" stroke-linejoin="round"><path d="M554.5 89.6 L561 93.2 V101.2 L554.5 105 L548 101.2 V93.2 Z"/><path d="M548.2 93.4 L554.5 97 L560.8 93.4 M554.5 97 V104.8"/></g>
<g fill="none" stroke="#cfcfcf" stroke-width="1.2" stroke-linejoin="round" stroke-linecap="round"><rect x="1653.4" y="836.2" width="15.6" height="13.8" rx="2.4"/><path d="M1656.6 840.4 L1659.4 842.4 L1656.6 844.4"/><path d="M1660.6 845.4 h3"/></g>
<path d="M1714 843.2 H1728.4 M1721.2 836 V850.4" stroke="#cfcfcf" stroke-width="1.3" fill="none"/>
<path d="M1736.6 842.1 L1739.6 845.1 L1742.6 842.1" fill="none" stroke="#cfcfcf" stroke-width="1.2" stroke-linecap="round" stroke-linejoin="round"/>
<g fill="none" stroke="#cfcfcf" stroke-width="1.4"><rect x="1764" y="835.8" width="14.8" height="14.8" rx="1.6"/><path d="M1771.4 835.8 V850.6"/></g>
<g fill="none" stroke="#cfcfcf" stroke-width="1.3" stroke-linecap="round" stroke-linejoin="round"><path d="M1797 838.4 H1810.2"/><path d="M1801.2 838.2 V836.4 h4.8 V838.2"/><path d="M1798.4 838.6 L1799 849.2 a1.4 1.4 0 0 0 1.4 1.3 h6.4 a1.4 1.4 0 0 0 1.4 -1.3 L1808.8 838.6"/><path d="M1801.6 841 V848 M1803.6 841 V848 M1805.6 841 V848"/></g>
<circle cx="1833" cy="843.4" r="1.1" fill="#cfcfcf"/>
<circle cx="1838" cy="843.4" r="1.1" fill="#cfcfcf"/>
<circle cx="1843" cy="843.4" r="1.1" fill="#cfcfcf"/>
<path d="M1863.8 845.3 L1867.6 841.5 L1871.4 845.3" fill="none" stroke="#cfcfcf" stroke-width="1.5" stroke-linecap="round" stroke-linejoin="round"/>
<path d="M1889.4 838.8 L1898.6 848 M1898.6 838.8 L1889.4 848" stroke="#cfcfcf" stroke-width="1.4" fill="none"/>
<path d="M1055.7 916.2 H1059.1000000000001 V919.6 H1055.7 Z M1055.7 916.2 h-1.45 a1.45 1.45 0 1 1 1.45 -1.45 Z M1059.1000000000001 916.2 v-1.45 a1.45 1.45 0 1 1 1.45 1.45 Z M1059.1000000000001 919.6 h1.45 a1.45 1.45 0 1 1 -1.45 1.45 Z M1055.7 919.6 v1.45 a1.45 1.45 0 1 1 -1.45 -1.45 Z" fill="none" stroke="#646464" stroke-width="1.15" stroke-linejoin="round"/>
<circle cx="349.4" cy="889.2" r="3.6" fill="none" stroke="#7a7a7a" stroke-width="1.2"/>
<g fill="none" stroke="#7a7a7a" stroke-width="1.3" stroke-linecap="round" stroke-linejoin="round"><path d="M12.2 941.2 L17.6 945.4 L12.2 949.6"/><path d="M22 936.8 L18.6 940.8 L22 944.8"/></g>
<path d="M0 951 A5 5 0 0 0 5 956 L0 956 Z" fill="#000"/><path d="M0 950.6 A5.4 5.4 0 0 0 5.4 956" fill="none" stroke="#3e3e3e" stroke-width="1"/>
<g fill="none" stroke="#7a7a7a" stroke-width="1.2" stroke-linecap="round"><circle cx="49.6" cy="948.4" r="2"/><circle cx="57" cy="939.4" r="2"/><path d="M49.6 937.4 V946.4"/><path d="M57 941.4 C57 945.6 53.6 947.4 51.6 948.2"/></g>
<g fill="none" stroke="#7a7a7a" stroke-width="1.2" stroke-linecap="round" stroke-linejoin="round"><path d="M129.2 942.6 a6 6 0 0 1 11 -2.4"/><path d="M140.6 936.8 V940.4 H137"/><path d="M140.8 944.4 a6 6 0 0 1 -11 2.4"/><path d="M129.4 950.2 V946.6 H133"/></g>
<g fill="none" stroke="#7a7a7a" stroke-width="1.2" stroke-linecap="round"><circle cx="168.3" cy="943.6" r="6.4"/><path d="M165.8 941.1 L170.8 946.1 M170.8 941.1 L165.8 946.1"/></g>
<g fill="none" stroke="#7a7a7a" stroke-width="1.2" stroke-linecap="round" stroke-linejoin="round"><path d="M202.9 937.4 L209.6 949.6 H196.2 Z"/><path d="M202.9 942 V945.6"/><circle cx="202.9" cy="947.6" r="0.4"/></g>
<g fill="none" stroke="#7a7a7a" stroke-width="1.2" stroke-linecap="round"><circle cx="1087" cy="943.8" r="2.7"/><path d="M1079 943.8 H1084.2 M1089.8 943.8 H1095"/></g>
<g fill="none" stroke="#7a7a7a" stroke-width="1.2" stroke-linejoin="round" stroke-linecap="round"><path d="M1884.4 948 C1886 946.4 1885.8 944.6 1885.8 942.4 a4.6 4.6 0 0 1 6.4 -4.2"/><path d="M1895 943.2 C1895 945.4 1895 946.6 1896.4 948 H1884.4"/><path d="M1888.8 949.8 a1.8 1.8 0 0 0 3.4 0"/></g><circle cx="1894.6" cy="939" r="2.4" fill="#7a7a7a"/>
</svg>
</div></body></html>
